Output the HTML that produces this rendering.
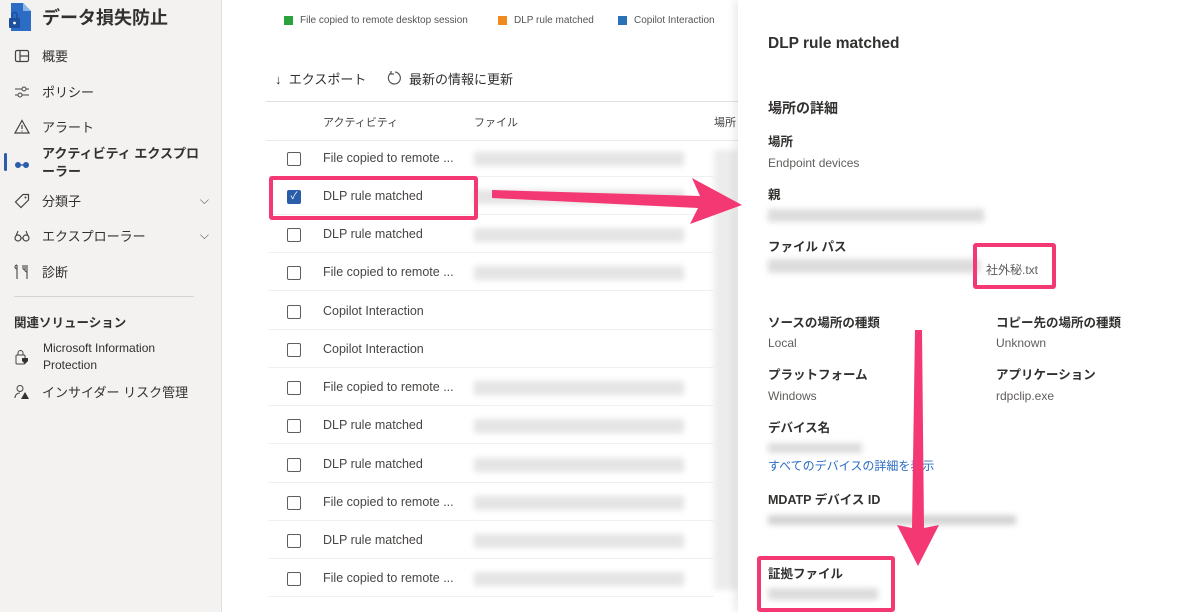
<!DOCTYPE html>
<html><head><meta charset="utf-8"><style>
*{margin:0;padding:0;box-sizing:border-box}
body{width:1200px;height:612px;overflow:hidden;position:relative;background:#fff;font-family:"Liberation Sans","Noto Sans CJK JP",sans-serif;color:#323130}
.abs{position:absolute}
#side{left:0;top:0;width:222px;height:612px;background:#f3f2f1;border-right:1px solid #e1dfdd}
.nav{position:absolute;left:14px;font-size:13px;color:#323130;display:flex;align-items:center}
.nav .ic{width:16px;height:16px;margin-right:12px;display:inline-block}
.row{position:absolute;left:268px;width:446px;height:38px;border-bottom:1px solid #f0f0f0}
.cb{position:absolute;left:19px;top:13px;width:14px;height:14px;border:1px solid #605e5c;border-radius:2px;background:#fff}
.rt{position:absolute;left:55px;top:12px;font-size:12.5px;color:#484644}
.blur{position:absolute;background:#e4e4e4;filter:blur(3px)}
.lbl{position:absolute;font-size:12.5px;font-weight:bold;color:#323130}
.val{position:absolute;font-size:12px;color:#605e5c}
.pink{position:absolute;border:4px solid #f43873;border-radius:3px}
</style></head><body>
<div id="side" class="abs">
 <svg class="abs" style="left:9px;top:3px" width="22" height="28" viewBox="0 0 22 28"><path d="M2 0h12l8 8v20H2z" fill="#2b6cc4"/><path d="M14 0v8h8z" fill="#8ab4ea"/><rect x="0" y="15" width="11" height="10" rx="1" fill="#1d4f9a"/><path d="M3 15v-3a2.5 2.5 0 015 0v3" stroke="#1d4f9a" stroke-width="1.6" fill="none"/><circle cx="5.5" cy="20" r="1.4" fill="#fff"/></svg>
 <div class="abs" style="left:42px;top:4px;font-size:18px;font-weight:bold;color:#323130">データ損失防止</div>
 <div class="nav" style="top:46px"><svg class="ic" viewBox="0 0 16 16"><rect x="1.5" y="2.5" width="13" height="11" rx="1.5" fill="none" stroke="#444" stroke-width="1.2"/><path d="M6 2.5v11M6 8h8.5" stroke="#444" stroke-width="1.2"/></svg>概要</div>
 <div class="nav" style="top:82px"><svg class="ic" viewBox="0 0 16 16"><path d="M1 5h14M1 11h14" stroke="#444" stroke-width="1.1"/><circle cx="10" cy="5" r="2" fill="#f3f2f1" stroke="#444"/><circle cx="6" cy="11" r="2" fill="#f3f2f1" stroke="#444"/></svg>ポリシー</div>
 <div class="nav" style="top:117px"><svg class="ic" viewBox="0 0 16 16"><path d="M8 1.5L15 14H1z" fill="none" stroke="#444" stroke-width="1.2"/><path d="M8 6v4M8 11.5v1" stroke="#444" stroke-width="1.2"/></svg>アラート</div>
 <div class="abs" style="left:4px;top:153px;width:3px;height:18px;background:#2b5eaa;border-radius:2px"></div>
 <div class="nav" style="top:145px;align-items:flex-start;font-weight:bold;line-height:18px;width:190px"><svg class="ic" viewBox="0 0 16 16" style="margin-top:10px"><circle cx="4" cy="10" r="3" fill="#2b5eaa"/><circle cx="12" cy="10" r="3" fill="#2b5eaa"/><path d="M7 10h2" stroke="#2b5eaa" stroke-width="1.4"/></svg><span>アクティビティ エクスプロ<br>ーラー</span></div>
 <div class="nav" style="top:191px;width:195px"><svg class="ic" viewBox="0 0 16 16"><path d="M9 1.5h5.5V7L7 14.5 1.5 9z" fill="none" stroke="#444" stroke-width="1.2"/><circle cx="11.5" cy="4.5" r="1" fill="#444"/></svg>分類子<span style="position:absolute;right:0;font-size:12px;color:#555">⌵</span></div>
 <div class="nav" style="top:226px;width:195px"><svg class="ic" viewBox="0 0 16 16"><circle cx="4" cy="10" r="3" fill="none" stroke="#444" stroke-width="1.2"/><circle cx="12" cy="10" r="3" fill="none" stroke="#444" stroke-width="1.2"/><path d="M7 10h2M2 8l2-5M14 8l-2-5" stroke="#444" stroke-width="1.1"/></svg>エクスプローラー<span style="position:absolute;right:0;font-size:12px;color:#555">⌵</span></div>
 <div class="nav" style="top:262px"><svg class="ic" viewBox="0 0 16 16"><path d="M3 1v14M3 5a2 2 0 010-4M11 1v5a2 2 0 002 2M13 1v14M9 1v3a2 2 0 002 2" stroke="#444" stroke-width="1.1" fill="none"/></svg>診断</div>
 <div class="abs" style="left:14px;top:296px;width:180px;height:1px;background:#d6d4d2"></div>
 <div class="abs" style="left:14px;top:312px;font-size:12.5px;font-weight:bold">関連ソリューション</div>
 <div class="nav" style="top:340px;align-items:center;font-size:12px;line-height:17px"><svg class="ic" viewBox="0 0 16 16"><rect x="2" y="6" width="9" height="9" rx="1" fill="none" stroke="#444"/><path d="M4 6V4a2.5 2.5 0 015 0v2" stroke="#444" fill="none"/><path d="M8 9h6v3l-3 3-3-3z" fill="#333"/></svg><span style="margin-left:1px">Microsoft Information<br>Protection</span></div>
 <div class="nav" style="top:382px"><svg class="ic" viewBox="0 0 16 16"><circle cx="6" cy="4.5" r="3" fill="none" stroke="#444"/><path d="M1 14c0-3 2-5 5-5" stroke="#444" fill="none"/><path d="M11 8l4 7H7z" fill="#333"/></svg>インサイダー リスク管理</div>
</div>

<div class="abs" style="left:284px;top:16px;width:9px;height:9px;background:#2aa33c"></div>
<div class="abs" style="left:300px;top:15px;font-size:10px;color:#555">File copied to remote desktop session</div>
<div class="abs" style="left:498px;top:16px;width:9px;height:9px;background:#f0891e"></div>
<div class="abs" style="left:514px;top:15px;font-size:10px;color:#555">DLP rule matched</div>
<div class="abs" style="left:618px;top:16px;width:9px;height:9px;background:#2a72b8"></div>
<div class="abs" style="left:634px;top:15px;font-size:10px;color:#555">Copilot Interaction</div>

<div class="abs" style="left:275px;top:69px;font-size:13px;color:#323130">↓&nbsp; エクスポート</div>
<svg class="abs" style="left:387px;top:70px" width="16" height="16" viewBox="0 0 16 16"><path d="M4 3A6 6 0 1 0 8 2" fill="none" stroke="#555" stroke-width="1.2"/><path d="M4 1v3h3" fill="none" stroke="#555" stroke-width="1.2"/></svg>
<div class="abs" style="left:409px;top:69px;font-size:13px;color:#323130">最新の情報に更新</div>
<div class="abs" style="left:266px;top:101px;width:472px;height:1px;background:#e1dfdd"></div>
<div class="abs" style="left:323px;top:114px;font-size:11px;color:#444">アクティビティ</div>
<div class="abs" style="left:474px;top:114px;font-size:11px;color:#444">ファイル</div>
<div class="abs" style="left:714px;top:114px;font-size:11px;color:#444">場所</div>
<div class="abs" style="left:266px;top:140px;width:472px;height:1px;background:#e9e9e9"></div>

<div class="row" style="top:139px"><div class="cb"></div><div class="rt">File copied to remote ...</div></div>
<div class="row" style="top:177px"><div class="cb" style="background:#2b5eaa;border-color:#2b5eaa;color:#fff;font-size:10px;line-height:12px;text-align:center">✓</div><div class="rt">DLP rule matched</div></div>
<div class="row" style="top:215px"><div class="cb"></div><div class="rt">DLP rule matched</div></div>
<div class="row" style="top:253px"><div class="cb"></div><div class="rt">File copied to remote ...</div></div>
<div class="row" style="top:292px"><div class="cb"></div><div class="rt">Copilot Interaction</div></div>
<div class="row" style="top:330px"><div class="cb"></div><div class="rt">Copilot Interaction</div></div>
<div class="row" style="top:368px"><div class="cb"></div><div class="rt">File copied to remote ...</div></div>
<div class="row" style="top:406px"><div class="cb"></div><div class="rt">DLP rule matched</div></div>
<div class="row" style="top:445px"><div class="cb"></div><div class="rt">DLP rule matched</div></div>
<div class="row" style="top:483px"><div class="cb"></div><div class="rt">File copied to remote ...</div></div>
<div class="row" style="top:521px"><div class="cb"></div><div class="rt">DLP rule matched</div></div>
<div class="row" style="top:559px"><div class="cb"></div><div class="rt">File copied to remote ...</div></div>

<div class="blur" style="left:474px;top:152px;width:210px;height:14px"></div>
<div class="blur" style="left:474px;top:190px;width:210px;height:14px"></div>
<div class="blur" style="left:474px;top:228px;width:210px;height:14px"></div>
<div class="blur" style="left:474px;top:266px;width:210px;height:14px"></div>
<div class="blur" style="left:474px;top:381px;width:210px;height:14px"></div>
<div class="blur" style="left:474px;top:419px;width:210px;height:14px"></div>
<div class="blur" style="left:474px;top:458px;width:210px;height:14px"></div>
<div class="blur" style="left:474px;top:496px;width:210px;height:14px"></div>
<div class="blur" style="left:474px;top:534px;width:210px;height:14px"></div>
<div class="blur" style="left:474px;top:572px;width:210px;height:14px"></div>
<div class="blur" style="left:714px;top:150px;width:24px;height:440px;background:#ececec"></div>

<div class="abs" style="left:738px;top:0;width:462px;height:612px;background:#fff;box-shadow:-4px 0 8px rgba(0,0,0,0.08)"></div>
<div class="abs" style="left:768px;top:35px;font-size:15.5px;font-weight:bold">DLP rule matched</div>
<div class="abs" style="left:768px;top:98px;font-size:14px;font-weight:bold">場所の詳細</div>
<div class="lbl" style="left:768px;top:131px">場所</div>
<div class="val" style="left:768px;top:156px">Endpoint devices</div>
<div class="lbl" style="left:768px;top:184px">親</div>
<div class="blur" style="left:768px;top:209px;width:216px;height:13px;background:#dcdcdc"></div>
<div class="lbl" style="left:768px;top:236px">ファイル パス</div>
<div class="blur" style="left:768px;top:259px;width:212px;height:14px;background:#dcdcdc"></div>
<div class="val" style="left:986px;top:261px">社外秘.txt</div>
<div class="lbl" style="left:768px;top:312px">ソースの場所の種類</div>
<div class="val" style="left:768px;top:336px">Local</div>
<div class="lbl" style="left:996px;top:312px">コピー先の場所の種類</div>
<div class="val" style="left:996px;top:336px">Unknown</div>
<div class="lbl" style="left:768px;top:364px">プラットフォーム</div>
<div class="val" style="left:768px;top:389px">Windows</div>
<div class="lbl" style="left:996px;top:364px">アプリケーション</div>
<div class="val" style="left:996px;top:389px">rdpclip.exe</div>
<div class="lbl" style="left:768px;top:417px">デバイス名</div>
<div class="blur" style="left:768px;top:443px;width:94px;height:10px;background:#dcdcdc"></div>
<div class="val" style="left:768px;top:457px;color:#2b6cc4">すべてのデバイスの詳細を表示</div>
<div class="lbl" style="left:768px;top:489px">MDATP デバイス ID</div>
<div class="blur" style="left:768px;top:515px;width:248px;height:10px;background:#d4d4d4"></div>
<div class="lbl" style="left:768px;top:563px">証拠ファイル</div>
<div class="blur" style="left:768px;top:588px;width:110px;height:12px;background:#dcdcdc"></div>

<div class="pink" style="left:269px;top:176px;width:209px;height:44px"></div>
<div class="pink" style="left:973px;top:243px;width:83px;height:46px"></div>
<div class="pink" style="left:757px;top:556px;width:138px;height:56px"></div>
<svg class="abs" style="left:0;top:0" width="1200" height="612">
 <path d="M492 190 L700 196 L692 178 L742 205 L690 224 L698 208 L492 198 Z" fill="#f43873"/>
 <path d="M915 330 L922 330 L924 528 L939 525 L918 566 L897 525 L912 528 Z" fill="#f43873"/>
</svg>
</body></html>
